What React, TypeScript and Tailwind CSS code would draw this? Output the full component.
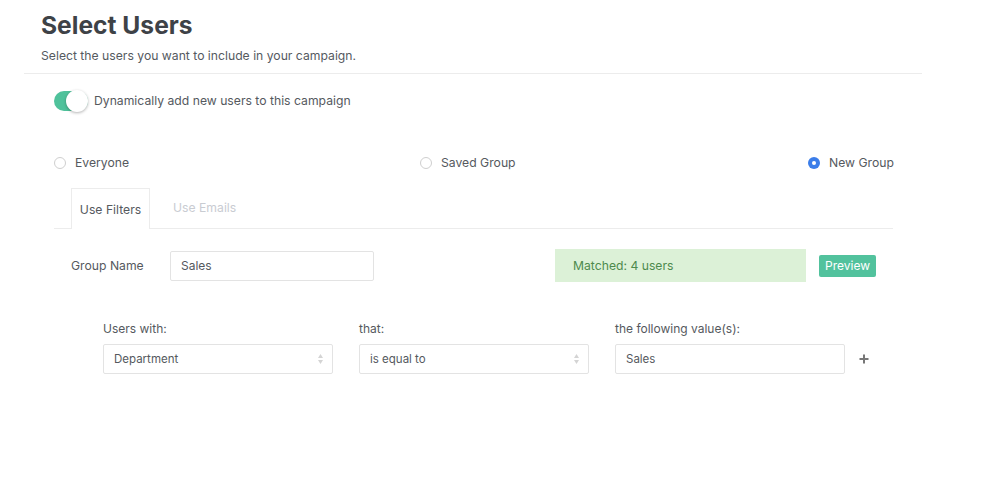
import React from "react";

const font = { fontFamily: "Inter, 'Noto Sans', sans-serif" };

function Radio({ checked, label }: { checked?: boolean; label: string }) {
  return (
    <div className="flex items-center gap-[9px] whitespace-nowrap">
      {checked ? (
        <span className="shrink-0 w-[12px] h-[12px] rounded-full bg-[#3b7de9] flex items-center justify-center">
          <span className="w-[4px] h-[4px] rounded-full bg-white" />
        </span>
      ) : (
        <span className="shrink-0 w-[12px] h-[12px] rounded-full border border-[#cfcfcf] bg-white" />
      )}
      <span className="text-[12.2px] text-[#55595e]">{label}</span>
    </div>
  );
}

function SelectBox({ value }: { value: string }) {
  return (
    <div className="w-[230px] h-[30px] border border-[#e3e3e3] rounded-[2px] flex items-center justify-between pl-[10px] pr-[8px]">
      <span className="text-[11.5px] text-[#55595e]">{value}</span>
      <svg width="7" height="12" viewBox="0 0 7 12">
        <path d="M3.5 1 L6 5 L1 5 Z" fill="#d4d4d4" />
        <path d="M3.5 11 L6 7 L1 7 Z" fill="#d4d4d4" />
      </svg>
    </div>
  );
}

export default function App() {
  return (
    <div className="w-[995px] h-[480px] bg-white overflow-hidden" style={font}>
      <div className="ml-[24px] w-[898px]">
        <div className="pl-[17px] pt-[10px] pb-[9px] border-b border-[#ececec]">
          <h1 className="text-[24.6px] leading-[30px] font-bold text-[#3e4247]">Select Users</h1>
          <p className="mt-[8px] text-[12.2px] leading-[16px] text-[#555a5f]">
            Select the users you want to include in your campaign.
          </p>
        </div>
        <div className="pl-[30px] pr-[29px]">
          <div className="mt-[16px] flex items-center gap-[6px]">
            <div className="relative w-[34px] h-[22px]">
              <div className="absolute left-0 top-[1px] w-[34px] h-[20px] rounded-full bg-[#4fc29b]" />
              <div className="absolute right-0 top-0 w-[22px] h-[22px] rounded-full bg-white shadow-[0_1px_3px_rgba(0,0,0,0.3)]" />
            </div>
            <span className="text-[12.2px] text-[#55595e]">Dynamically add new users to this campaign</span>
          </div>
          <div className="mt-[42px] flex items-center">
            <div className="w-[366px] shrink-0">
              <Radio label="Everyone" />
            </div>
            <div className="w-[388px] shrink-0">
              <Radio label="Saved Group" />
            </div>
            <Radio checked label="New Group" />
          </div>
          <div className="mt-[15px] flex items-end border-b border-[#ececec] pl-[17px]">
            <div className="h-[41px] w-[79px] border border-b-0 border-[#ececec] bg-white -mb-px flex items-center justify-center pt-[1px] text-[12.2px] text-[#55595e]">
              Use Filters
            </div>
            <div className="h-[41px] px-[23px] flex items-center pt-[1px] text-[12.2px] text-[#c9ccd2]">Use Emails</div>
          </div>
          <div className="mt-[20px] flex items-center pl-[17px]">
            <span className="w-[99px] text-[12.2px] text-[#55595e]">Group Name</span>
            <div className="w-[204px] h-[30px] border border-[#e3e3e3] rounded-[2px] flex items-center pl-[10px] text-[12px] text-[#55595e]">
              Sales
            </div>
            <div className="ml-[181px] w-[251px] h-[33px] bg-[#dcf1d7] flex items-center pl-[18px] text-[12.2px] text-[#4e8a4d]">
              Matched: 4 users
            </div>
            <div className="ml-[13px] w-[57px] h-[22px] bg-[#52c29d] rounded-[2px] flex items-center justify-center text-[12px] text-white">
              Preview
            </div>
          </div>
          <div className="mt-[39px] pl-[49px] flex gap-[26px]">
            <div className="flex flex-col gap-[8px]">
              <span className="text-[12px] text-[#55595e] leading-[15px]">Users with:</span>
              <SelectBox value="Department" />
            </div>
            <div className="flex flex-col gap-[8px]">
              <span className="text-[12px] text-[#55595e] leading-[15px]">that:</span>
              <SelectBox value="is equal to" />
            </div>
            <div className="flex flex-col gap-[8px]">
              <span className="text-[12px] text-[#55595e] leading-[15px]">the following value(s):</span>
              <div className="flex items-center">
                <div className="w-[230px] h-[30px] border border-[#e3e3e3] rounded-[2px] flex items-center pl-[10px] text-[11.5px] text-[#55595e]">
                  Sales
                </div>
                <svg className="ml-[14px]" width="10" height="10" viewBox="0 0 10 10">
                  <path d="M5 0.5 V9.5 M0.5 5 H9.5" stroke="#777" strokeWidth="2" />
                </svg>
              </div>
            </div>
          </div>
        </div>
      </div>
    </div>
  );
}
